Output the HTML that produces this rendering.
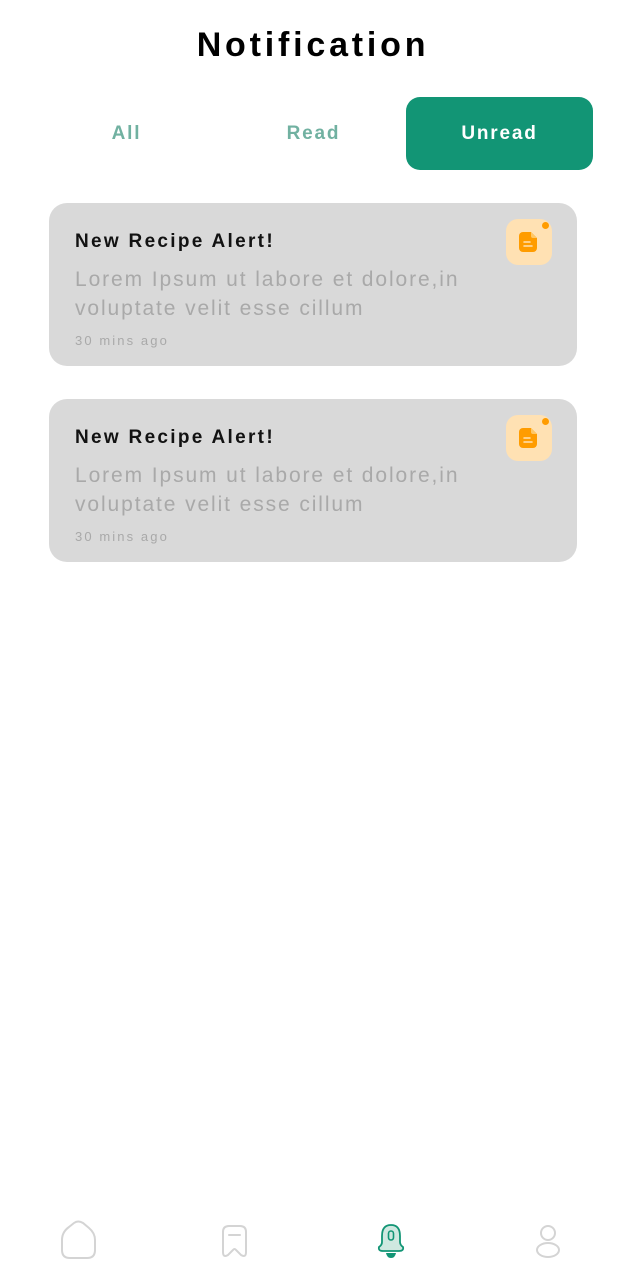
<!DOCTYPE html>
<html><head><meta charset="utf-8"><style>
*{margin:0;padding:0;box-sizing:border-box}
body{width:626px;height:1280px;background:#fff;font-family:"Liberation Sans",sans-serif;position:relative;overflow:hidden}
.t{position:absolute;left:0;width:626px;top:26px;text-align:center;font-size:34px;font-weight:bold;letter-spacing:3.8px;color:#000}
.tab{position:absolute;top:97px;height:73px;line-height:73px;text-align:center;font-size:19px;font-weight:bold;letter-spacing:1.8px;color:#71b1a1}
.on{background:#129575;color:#fff;border-radius:14px}
.card{position:absolute;left:49px;width:528px;height:163px;background:#d9d9d9;border-radius:18px}
.h{position:absolute;left:26px;top:28px;font-size:19px;font-weight:bold;letter-spacing:2.3px;color:#121212}
.b{position:absolute;left:26px;top:62px;font-size:21px;line-height:29px;letter-spacing:1.9px;color:#a9a9a9;width:430px}
.tm{position:absolute;left:26px;top:130px;font-size:13px;letter-spacing:2.1px;color:#a9a9a9}
.ic{position:absolute;left:457px;top:16px;width:46px;height:46px;background:#ffe1b3;border-radius:12px}
.dot{position:absolute;right:3px;top:3px;width:7px;height:7px;border-radius:50%;background:#ff9c00}
</style></head><body>
<div class="t">Notification</div>
<div class="tab" style="left:33px;width:187px">All</div>
<div class="tab" style="left:220px;width:187px">Read</div>
<div class="tab on" style="left:406px;width:187px">Unread</div>

<div class="card" style="top:203px">
<div class="h">New Recipe Alert!</div>
<div class="b">Lorem Ipsum ut labore et dolore,in voluptate velit esse cillum</div>
<div class="tm">30 mins ago</div>
<div class="ic"><div class="dot"></div><svg width="46" height="46" viewBox="0 0 46 46"><path d="M17 13h8l6 6v10a4 4 0 0 1-4 4h-10a4 4 0 0 1-4-4v-12a4 4 0 0 1 4-4z" fill="#ff9c00"/><path d="M25 13v4a2 2 0 0 0 2 2h4" fill="#ffc766"/><path d="M18 23h6M18 27h8" stroke="#ffe1b3" stroke-width="1.5" stroke-linecap="round"/></svg></div>
</div>
<div class="card" style="top:399px">
<div class="h">New Recipe Alert!</div>
<div class="b">Lorem Ipsum ut labore et dolore,in voluptate velit esse cillum</div>
<div class="tm">30 mins ago</div>
<div class="ic"><div class="dot"></div><svg width="46" height="46" viewBox="0 0 46 46"><path d="M17 13h8l6 6v10a4 4 0 0 1-4 4h-10a4 4 0 0 1-4-4v-12a4 4 0 0 1 4-4z" fill="#ff9c00"/><path d="M25 13v4a2 2 0 0 0 2 2h4" fill="#ffc766"/><path d="M18 23h6M18 27h8" stroke="#ffe1b3" stroke-width="1.5" stroke-linecap="round"/></svg></div>
</div>

<svg style="position:absolute;left:0;top:1210px" width="626" height="60" viewBox="0 0 626 60">
<path d="M62 30 Q62 22 69 17 L74 13 Q78 10 83 13 L89 18 Q95 23 95 30 L95 40 Q95 48 87 48 L70 48 Q62 48 62 40 Z" fill="none" stroke="#d4d4d4" stroke-width="2"/>
<path d="M223 22 Q223 16 229 16 L240 16 Q246 16 246 22 L246 42 Q246 48 241 45 L236 40 Q234.5 38 233 40 L228 45 Q223 48 223 42 Z" fill="none" stroke="#d4d4d4" stroke-width="2"/>
<path d="M229 25h11" stroke="#d4d4d4" stroke-width="2" stroke-linecap="round"/>
<path d="M391 15 Q382 15 382 26 L382 32 Q382 35 379 37 Q378 41 383 41 L399 41 Q404 41 403 37 Q400 35 400 32 L400 26 Q400 15 391 15Z" fill="#cfe8e0" stroke="#129575" stroke-width="1.8"/>
<rect x="388.5" y="21" width="5" height="9" rx="2.5" fill="none" stroke="#129575" stroke-width="1.6"/>
<path d="M386 43 L396 43 Q395 48 391 48 Q387 48 386 43Z" fill="#129575"/>
<circle cx="548" cy="23" r="7" fill="none" stroke="#d4d4d4" stroke-width="2"/>
<ellipse cx="548" cy="40" rx="11" ry="7" fill="none" stroke="#d4d4d4" stroke-width="2"/>
</svg>
</body></html>
